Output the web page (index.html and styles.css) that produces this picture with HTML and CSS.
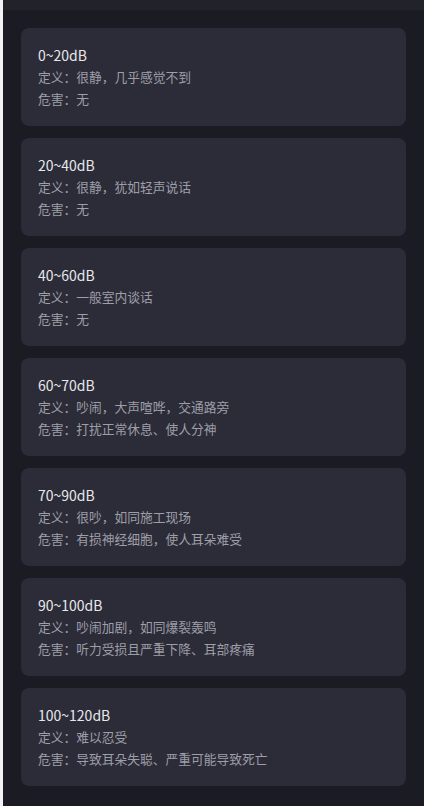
FILE: index.html
```html
<!DOCTYPE html>
<html lang="zh-CN">
<head>
<meta charset="utf-8">
<link rel="stylesheet" href="styles.css">
</head>
<body>
<div class="page">
  <div class="topbar"></div>
  <div class="list">
    <div class="card">
      <div class="title">0~20dB</div>
      <div class="line">定义：很静，几乎感觉不到</div>
      <div class="line">危害：无</div>
    </div>
    <div class="card">
      <div class="title">20~40dB</div>
      <div class="line">定义：很静，犹如轻声说话</div>
      <div class="line">危害：无</div>
    </div>
    <div class="card">
      <div class="title">40~60dB</div>
      <div class="line">定义：一般室内谈话</div>
      <div class="line">危害：无</div>
    </div>
    <div class="card">
      <div class="title">60~70dB</div>
      <div class="line">定义：吵闹，大声喧哗，交通路旁</div>
      <div class="line">危害：打扰正常休息、使人分神</div>
    </div>
    <div class="card">
      <div class="title">70~90dB</div>
      <div class="line">定义：很吵，如同施工现场</div>
      <div class="line">危害：有损神经细胞，使人耳朵难受</div>
    </div>
    <div class="card">
      <div class="title">90~100dB</div>
      <div class="line">定义：吵闹加剧，如同爆裂轰鸣</div>
      <div class="line">危害：听力受损且严重下降、耳部疼痛</div>
    </div>
    <div class="card">
      <div class="title">100~120dB</div>
      <div class="line">定义：难以忍受</div>
      <div class="line">危害：导致耳朵失聪、严重可能导致死亡</div>
    </div>
  </div>
</div>
</body>
</html>
```

FILE: styles.css
```css
html, body {
  margin: 0;
  padding: 0;
  background: #1b1b24;
}
body {
  font-family: "Noto Sans CJK SC", "Noto Sans", sans-serif;
}
.page {
  border-left: 3px solid #f2f2f4;
  min-height: 806px;
  box-sizing: border-box;
  background: #1b1b24;
}
.topbar {
  height: 10px;
  background: #222229;
}
.list {
  display: flex;
  flex-direction: column;
  gap: 12px;
  padding: 18px 18px 20px 18px;
}
.card {
  background: #2c2c38;
  border-radius: 8px;
  padding: 16px 17px;
  display: flex;
  flex-direction: column;
}
.title {
  font-size: 14px;
  line-height: 22px;
  color: #e8e8ec;
}
.line {
  font-size: 12.75px;
  line-height: 22px;
  color: #9e9ea8;
}
```
